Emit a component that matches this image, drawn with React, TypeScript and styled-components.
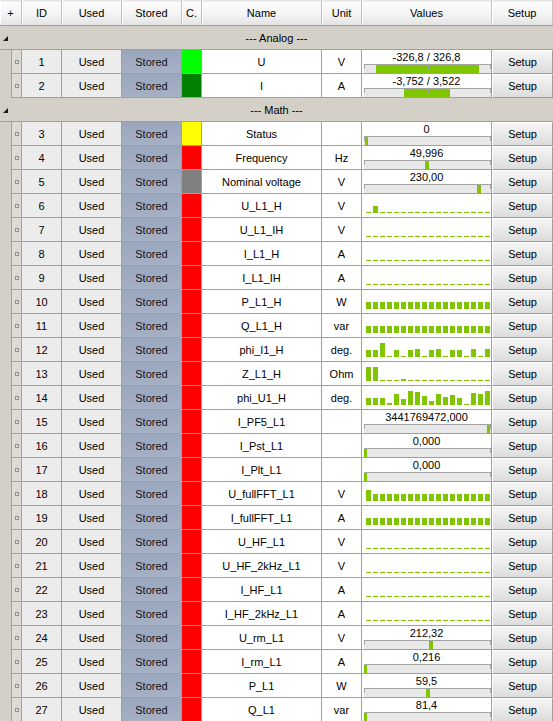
import React from 'react'
import styled, { createGlobalStyle } from 'styled-components'

const GlobalStyle = createGlobalStyle`
  html, body {
    margin: 0;
    padding: 0;
    background: #d4d0c8;
    overflow: hidden;
  }
  body {
    font-family: 'Liberation Sans', Arial, sans-serif;
    font-size: 11px;
    color: #000;
  }
`

const GRID = '#a0a0a0'
const GREEN = '#7fc600'

const Table = styled.div`
  width: 553px;
  display: flex;
  flex-direction: column;
`

const HeaderRow = styled.div`
  display: flex;
  height: 26px;
  box-sizing: border-box;
  border-bottom: 1px solid ${GRID};
`

const HeaderCell = styled.div<{ $w: number }>`
  flex: none;
  width: ${({ $w }) => $w}px;
  box-sizing: border-box;
  display: flex;
  align-items: center;
  justify-content: center;
  background: linear-gradient(#e4e4e4 0, #e4e4e4 1px, #fdfdfd 2px, #f5f5f5 55%, #e3e3e3 100%);
  border-right: 1px solid #c4c4c4;
  box-shadow: inset 1px 0 0 #ffffff;
  font-size: 11px;
  color: #000;
`

const GroupRow = styled.div`
  display: grid;
  grid-template-columns: 11px 1fr 11px;
  align-items: center;
  height: 24px;
  box-sizing: border-box;
  border-bottom: 1px solid ${GRID};
  background: #d4d0c8;
`

const Collapse = styled.span`
  justify-self: center;
  width: 0;
  height: 0;
  border-left: 5px solid transparent;
  border-bottom: 5px solid #1a1a1a;
  margin-top: 1px;
`

const GroupLabel = styled.span`
  text-align: center;
  color: #000;
`

const DataRow = styled.div`
  display: flex;
  height: 24px;
  padding-left: 11px;
`

const Cell = styled.div<{ $w: number; $bg?: string }>`
  flex: none;
  width: ${({ $w }) => $w}px;
  height: 24px;
  box-sizing: border-box;
  border-right: 1px solid ${GRID};
  border-bottom: 1px solid ${GRID};
  background: ${({ $bg }) => $bg || '#ffffff'};
  display: flex;
  align-items: center;
  justify-content: center;
  white-space: nowrap;
  overflow: hidden;
`

const MarkerCell = styled(Cell)`
  border-left: 1px solid ${GRID};
  background: #dedbd4;
`

const Dot = styled.span`
  width: 4px;
  height: 4px;
  box-sizing: border-box;
  border: 1px solid #8e8e8e;
  background: #e4e4e4;
`

const StoredCell = styled(Cell)`
  background: linear-gradient(#9aa6bc, #a7b1c5);
  color: #141420;
`

const ValueCell = styled(Cell)`
  flex-direction: column;
  align-items: stretch;
  justify-content: flex-start;
`

const ValueLabel = styled.div`
  height: 13px;
  line-height: 13px;
  padding-top: 1px;
  text-align: center;
`

const Track = styled.div`
  position: relative;
  width: 127px;
  height: 8px;
  margin-left: 2px;
  border-top: 1px solid #a4a4a4;
  background: #e8e8e8;

  &::before,
  &::after {
    content: '';
    position: absolute;
    top: 0;
    width: 1px;
    height: 4px;
    background: #a4a4a4;
  }
  &::before {
    left: 0;
  }
  &::after {
    right: 0;
  }
`

const CenterTick = styled.span`
  position: absolute;
  top: 0;
  left: 64px;
  width: 1px;
  height: 4px;
  background: #a4a4a4;
  z-index: 1;
`

const Indicator = styled.span`
  position: absolute;
  top: 0;
  bottom: 0;
  background: ${GREEN};
`

const Bars = styled.div`
  display: flex;
  align-items: flex-end;
  gap: 2px;
  height: 100%;
  box-sizing: border-box;
  padding: 0 0 4px 4px;
`

const Bar = styled.span`
  flex: none;
  width: 5px;
  background: ${GREEN};
`

const SetupCell = styled.div`
  flex: none;
  width: 61px;
  height: 24px;
`

const SetupButton = styled.button`
  width: 100%;
  height: 100%;
  margin: 0;
  padding: 0 0 1px;
  box-sizing: border-box;
  border: 1px solid;
  border-color: #ffffff #9c9c9c #9c9c9c #ffffff;
  background: linear-gradient(#f6f6f6, #e9e9e9 50%, #dcdcdc);
  font-family: 'Liberation Sans', Arial, sans-serif;
  font-size: 11px;
  color: #000;
`

type Value =
  | { kind: 'range'; text: string; left: number; width: number; center?: boolean }
  | { kind: 'bars'; heights: number[] }

type Row = {
  id: number
  name: string
  unit: string
  color: string
  value: Value
}

const RED = '#ff0000'
const zeros = () => Array(18).fill(0)
const flat = (h: number) => Array(18).fill(h)

const level = (text: string, left: number, width = 4): Value => ({ kind: 'range', text, left, width })
const bars = (heights: number[]): Value => ({ kind: 'bars', heights })

const analog: Row[] = [
  { id: 1, name: 'U', unit: 'V', color: '#00ff00', value: { kind: 'range', text: '-326,8 / 326,8', left: 12, width: 103, center: true } },
  { id: 2, name: 'I', unit: 'A', color: '#008000', value: { kind: 'range', text: '-3,752 / 3,522', left: 40, width: 46, center: true } },
]

const math: Row[] = [
  { id: 3, name: 'Status', unit: '', color: '#ffff00', value: level('0', 1, 3) },
  { id: 4, name: 'Frequency', unit: 'Hz', color: RED, value: level('49,996', 61) },
  { id: 5, name: 'Nominal voltage', unit: 'V', color: '#808080', value: level('230,00', 113) },
  { id: 6, name: 'U_L1_H', unit: 'V', color: RED, value: bars([0, 7, ...Array(16).fill(0)]) },
  { id: 7, name: 'U_L1_IH', unit: 'V', color: RED, value: bars(zeros()) },
  { id: 8, name: 'I_L1_H', unit: 'A', color: RED, value: bars(zeros()) },
  { id: 9, name: 'I_L1_IH', unit: 'A', color: RED, value: bars(zeros()) },
  { id: 10, name: 'P_L1_H', unit: 'W', color: RED, value: bars(flat(7)) },
  { id: 11, name: 'Q_L1_H', unit: 'var', color: RED, value: bars(flat(7)) },
  { id: 12, name: 'phi_I1_H', unit: 'deg.', color: RED, value: bars([7, 7, 14, 0, 7, 0, 7, 8, 0, 7, 8, 0, 7, 7, 0, 8, 0, 8]) },
  { id: 13, name: 'Z_L1_H', unit: 'Ohm', color: RED, value: bars([14, 14, 0, 0, 0, 2, ...Array(12).fill(0)]) },
  { id: 14, name: 'phi_U1_H', unit: 'deg.', color: RED, value: bars([7, 7, 7, 2, 11, 6, 14, 13, 9, 4, 11, 8, 10, 7, 0, 12, 11, 14]) },
  { id: 15, name: 'I_PF5_L1', unit: '', color: RED, value: level('3441769472,000', 123, 3) },
  { id: 16, name: 'I_Pst_L1', unit: '', color: RED, value: level('0,000', 0, 3) },
  { id: 17, name: 'I_Plt_L1', unit: '', color: RED, value: level('0,000', 0, 3) },
  { id: 18, name: 'U_fullFFT_L1', unit: 'V', color: RED, value: bars([11, ...Array(17).fill(7)]) },
  { id: 19, name: 'I_fullFFT_L1', unit: 'A', color: RED, value: bars(flat(7)) },
  { id: 20, name: 'U_HF_L1', unit: 'V', color: RED, value: bars(zeros()) },
  { id: 21, name: 'U_HF_2kHz_L1', unit: 'V', color: RED, value: bars(zeros()) },
  { id: 22, name: 'I_HF_L1', unit: 'A', color: RED, value: bars(zeros()) },
  { id: 23, name: 'I_HF_2kHz_L1', unit: 'A', color: RED, value: bars(zeros()) },
  { id: 24, name: 'U_rm_L1', unit: 'V', color: RED, value: level('212,32', 65) },
  { id: 25, name: 'I_rm_L1', unit: 'A', color: RED, value: level('0,216', 0, 3) },
  { id: 26, name: 'P_L1', unit: 'W', color: RED, value: level('59,5', 62) },
  { id: 27, name: 'Q_L1', unit: 'var', color: RED, value: level('81,4', 0, 3) },
]

function Values({ value }: { value: Value }) {
  if (value.kind === 'bars') {
    return (
      <ValueCell $w={130}>
        <Bars>
          {value.heights.map((h, i) => (
            <Bar key={i} style={{ height: Math.max(h, 1) }} />
          ))}
        </Bars>
      </ValueCell>
    )
  }
  return (
    <ValueCell $w={130}>
      <ValueLabel>{value.text}</ValueLabel>
      <Track>
        {value.center && <CenterTick />}
        <Indicator style={{ left: value.left, width: value.width }} />
      </Track>
    </ValueCell>
  )
}

function ChannelRow({ row }: { row: Row }) {
  return (
    <DataRow>
      <MarkerCell $w={11}>
        <Dot />
      </MarkerCell>
      <Cell $w={40} $bg="#ececec">{row.id}</Cell>
      <Cell $w={60} $bg="#ececec">Used</Cell>
      <StoredCell $w={60}>Stored</StoredCell>
      <Cell $w={20} $bg={row.color} />
      <Cell $w={120}>{row.name}</Cell>
      <Cell $w={40}>{row.unit}</Cell>
      <Values value={row.value} />
      <SetupCell>
        <SetupButton>Setup</SetupButton>
      </SetupCell>
    </DataRow>
  )
}

function Group({ title, rows }: { title: string; rows: Row[] }) {
  return (
    <>
      <GroupRow>
        <Collapse />
        <GroupLabel>--- {title} ---</GroupLabel>
      </GroupRow>
      {rows.map((r) => (
        <ChannelRow key={r.id} row={r} />
      ))}
    </>
  )
}

const columns: [string, number][] = [
  ['+', 22],
  ['ID', 40],
  ['Used', 60],
  ['Stored', 60],
  ['C.', 20],
  ['Name', 120],
  ['Unit', 40],
  ['Values', 130],
  ['Setup', 61],
]

export default function App() {
  return (
    <>
      <GlobalStyle />
      <Table>
        <HeaderRow>
          {columns.map(([label, w]) => (
            <HeaderCell key={label} $w={w}>
              {label}
            </HeaderCell>
          ))}
        </HeaderRow>
        <Group title="Analog" rows={analog} />
        <Group title="Math" rows={math} />
      </Table>
    </>
  )
}
